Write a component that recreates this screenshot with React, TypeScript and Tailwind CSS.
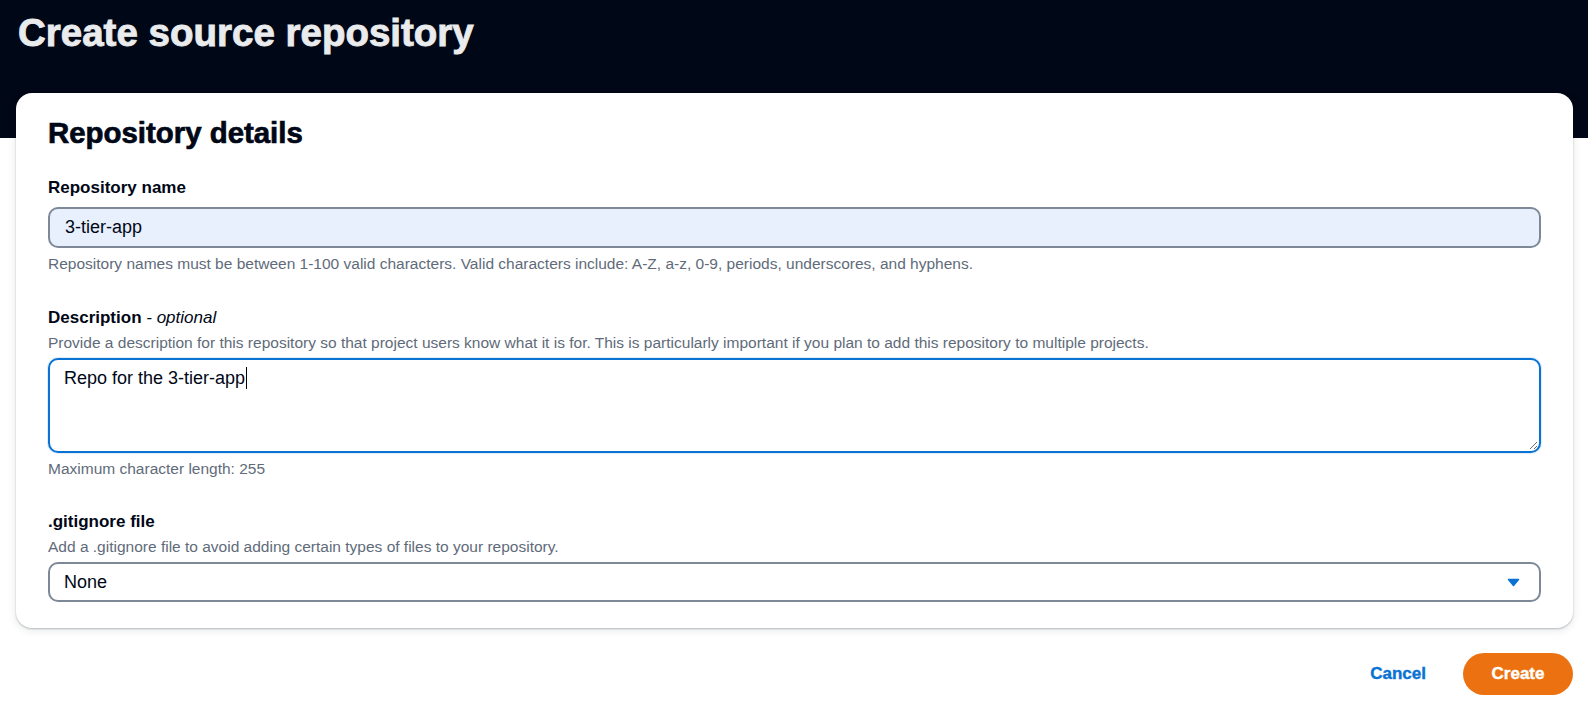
import React from "react";

export default function App() {
  return (
    <div className="min-h-[705px] bg-white font-['Liberation_Sans',Arial,sans-serif] text-[#000716]">
      <div className="h-[138px] bg-[#000716] px-[18px] pt-[9px]">
        <h1 className="text-[38.5px] font-bold leading-[48px] text-[#e9ebed] [-webkit-text-stroke:0.9px_#e9ebed]">Create source repository</h1>
      </div>
      <div className="-mt-[45px] ml-[16px] mr-[15px]">
        <div className="rounded-[16px] bg-white px-[32px] pt-[22px] pb-[26px] shadow-[0_1px_2px_rgba(0,28,36,0.25),0_2px_10px_rgba(0,28,36,0.1)]">
          <h2 className="text-[29.4px] font-bold leading-[36px] [-webkit-text-stroke:0.7px_#000716]">Repository details</h2>

          <div className="mt-[26px]">
            <div className="text-[17px] font-bold leading-[22px]">Repository name</div>
            <div className="mt-[8px] flex h-[41px] items-center rounded-[10px] border-2 border-[#7d8998] bg-[#e8f0fe] px-[15px] text-[18px]">
              3-tier-app
            </div>
            <p className="mt-[6px] text-[15.5px] leading-[20px] text-[#5f6b7a]">
              Repository names must be between 1-100 valid characters. Valid characters include: A-Z, a-z, 0-9, periods, underscores, and hyphens.
            </p>
          </div>

          <div className="mt-[33px]">
            <div className="text-[17px] leading-[22px]">
              <span className="font-bold">Description</span>
              <span className="italic"> - optional</span>
            </div>
            <p className="mt-[4px] text-[15.5px] leading-[20px] text-[#5f6b7a]">
              Provide a description for this repository so that project users know what it is for. This is particularly important if you plan to add this repository to multiple projects.
            </p>
            <div className="relative mt-[5px] h-[95px] rounded-[10px] border-2 border-[#0972d3] bg-white px-[14px] pt-[6px] shadow-[0_0_0_1px_rgba(9,114,211,0.12)]">
              <div className="flex items-center text-[18px] leading-[24px]">
                <span>Repo for the 3-tier-app</span>
                <span className="ml-[1px] inline-block h-[22px] w-px bg-black" />
              </div>
              <svg className="absolute bottom-[1px] right-[1px]" width="9" height="9" viewBox="0 0 9 9">
                <path d="M8 1 L1 8 M8 5 L5 8" stroke="#6b6b6b" strokeWidth="1" />
              </svg>
            </div>
            <p className="mt-[6px] text-[15.5px] leading-[20px] text-[#5f6b7a]">Maximum character length: 255</p>
          </div>

          <div className="mt-[32px]">
            <div className="text-[17px] font-bold leading-[22px]">.gitignore file</div>
            <p className="mt-[4px] text-[15.5px] leading-[20px] text-[#5f6b7a]">
              Add a .gitignore file to avoid adding certain types of files to your repository.
            </p>
            <div className="mt-[5px] flex h-[40px] items-center justify-between rounded-[10px] border-2 border-[#7d8998] bg-white pl-[14px] pr-[19px] text-[18px]">
              <span>None</span>
              <svg width="13" height="9" viewBox="0 0 13 9">
                <path d="M1.5 1.5 L11.5 1.5 L6.5 7.5 Z" fill="#0972d3" stroke="#0972d3" strokeWidth="1.5" strokeLinejoin="round" />
              </svg>
            </div>
          </div>
        </div>

        <div className="mt-[25px] flex items-center justify-end gap-[37px]">
          <span className="text-[17px] font-bold text-[#0972d3] [-webkit-text-stroke:0.4px_#0972d3]">Cancel</span>
          <button className="h-[42px] w-[110px] rounded-full bg-[#ec7211] text-[17px] font-bold text-white [-webkit-text-stroke:0.4px_#ffffff]">
            Create
          </button>
        </div>
      </div>
    </div>
  );
}
